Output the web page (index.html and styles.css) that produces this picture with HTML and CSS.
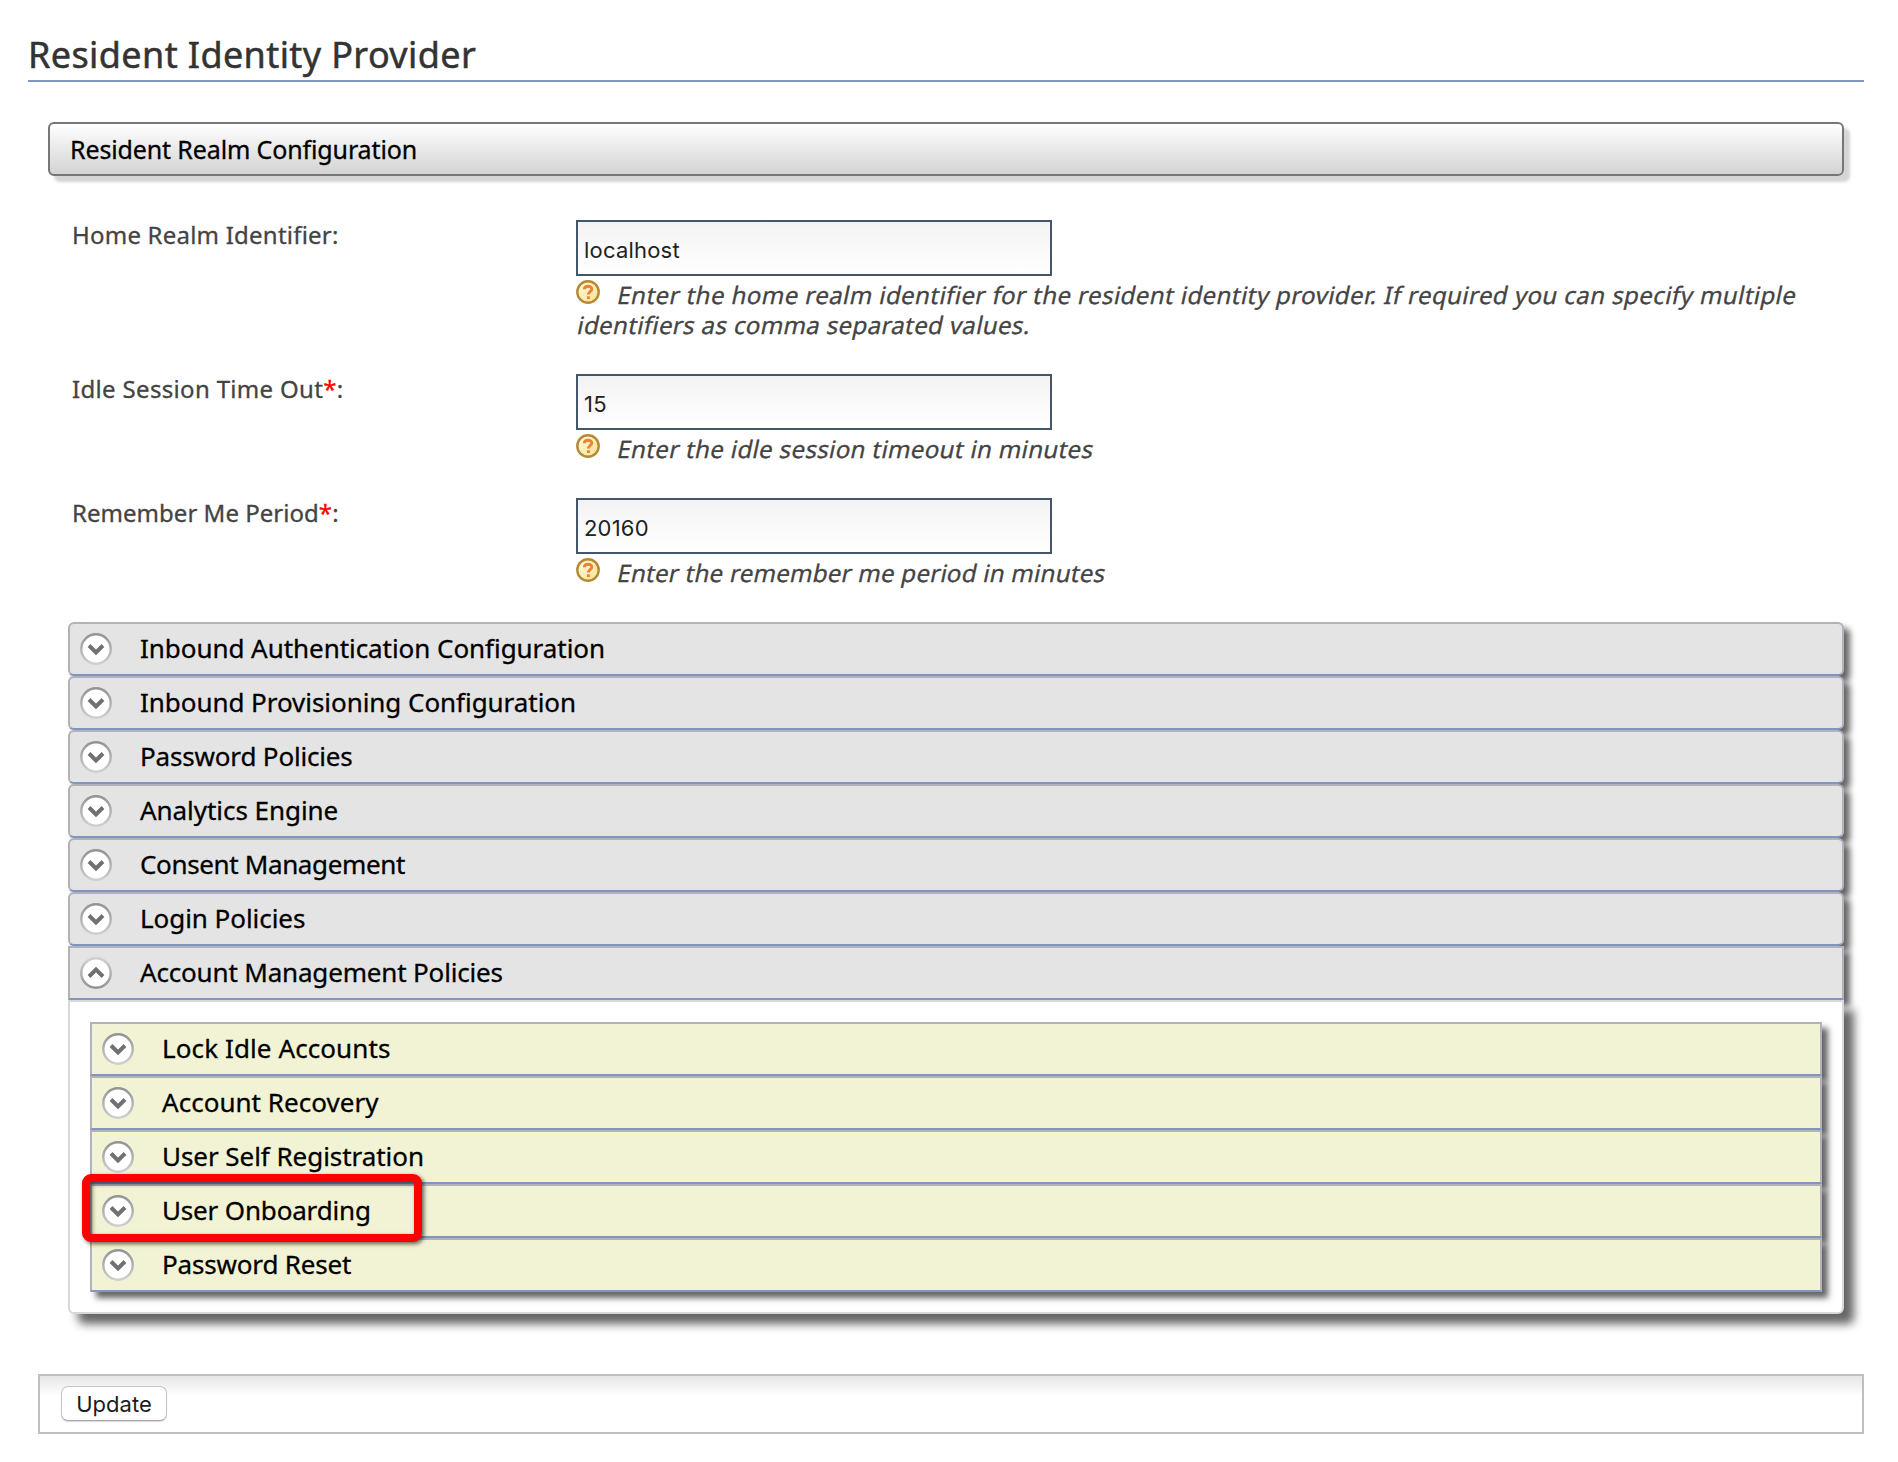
FILE: index.html
```
<!DOCTYPE html>
<html lang="en">
<head>
<meta charset="utf-8">
<title>Resident Identity Provider</title>
<link rel="stylesheet" href="styles.css">
</head>
<body>
<svg class="defs" width="0" height="0" aria-hidden="true">
  <defs>
    <linearGradient id="ring" x1="0" y1="0" x2="0" y2="1">
      <stop offset="0" stop-color="#929395"/><stop offset="1" stop-color="#cfcfcf"/>
    </linearGradient>
    <linearGradient id="ringUp" x1="0" y1="0" x2="0" y2="1">
      <stop offset="0" stop-color="#cfcfcf"/><stop offset="1" stop-color="#929395"/>
    </linearGradient>
    <linearGradient id="gold" x1="0" y1="0" x2="1" y2="1">
      <stop offset="0" stop-color="#fffbe0"/><stop offset="1" stop-color="#f9e190"/>
    </linearGradient>
    <symbol id="down" viewBox="0 0 32 32">
      <circle cx="16" cy="16" r="14.7" fill="#fff" stroke="url(#ring)" stroke-width="2.4"/>
      <path d="M9 12.500l7 7l7-7" fill="none" stroke="#6f7174" stroke-width="4"/>
    </symbol>
    <symbol id="up" viewBox="0 0 32 32">
      <circle cx="16" cy="16" r="14.700" fill="#fff" stroke="url(#ringUp)" stroke-width="2.4"/>
      <path d="M9 19.500l7-7l7 7" fill="none" stroke="#6f7174" stroke-width="4"/>
    </symbol>
    <symbol id="help" viewBox="0 0 24 24">
      <circle cx="12" cy="12" r="10.700" fill="url(#gold)" stroke="#b58a33" stroke-width="2.400"/>
      <path d="M8.300 9.200C8.500 5.300 15.900 5.200 15.800 9.300C15.700 11.800 12.400 11.700 12.400 14.600" fill="none" stroke="#ea8238" stroke-width="2.900"/>
      <rect x="11" y="16.300" width="2.900" height="2.700" fill="#ea8238"/>
    </symbol>
  </defs>
</svg>
<main class="page">
  <h1 class="title">Resident Identity Provider</h1>
  <section class="content">
    <h2 class="realm">Resident Realm Configuration</h2>
    <form class="form">
      <div class="field">
        <label class="label home" for="home">Home Realm Identifier:</label>
        <div class="control">
          <input class="input" id="home" type="text" value="localhost">
          <p class="hint"><svg class="help"><use href="#help"/></svg><span class="line long">Enter the home realm identifier for the resident identity provider. If required you can specify multiple</span><br><span class="line">identifiers as comma separated values.</span></p>
        </div>
      </div>
      <div class="field">
        <label class="label" for="idle">Idle Session Time Out<span class="required">*</span>:</label>
        <div class="control">
          <input class="input" id="idle" type="text" value="15">
          <p class="hint"><svg class="help"><use href="#help"/></svg><span class="line">Enter the idle session timeout in minutes</span></p>
        </div>
      </div>
      <div class="field">
        <label class="label remember" for="remember">Remember Me Period<span class="required">*</span>:</label>
        <div class="control">
          <input class="input" id="remember" type="text" value="20160">
          <p class="hint"><svg class="help"><use href="#help"/></svg><span class="line short">Enter the remember me period in minutes</span></p>
        </div>
      </div>
    </form>
    <div class="accordion">
      <div class="row"><svg class="arrow"><use href="#down"/></svg><span>Inbound Authentication Configuration</span></div>
      <div class="row"><svg class="arrow"><use href="#down"/></svg><span>Inbound Provisioning Configuration</span></div>
      <div class="row"><svg class="arrow"><use href="#down"/></svg><span class="snug">Password Policies</span></div>
      <div class="row"><svg class="arrow"><use href="#down"/></svg><span>Analytics Engine</span></div>
      <div class="row"><svg class="arrow"><use href="#down"/></svg><span class="tight">Consent Management</span></div>
      <div class="row"><svg class="arrow"><use href="#down"/></svg><span>Login Policies</span></div>
      <div class="row open"><svg class="arrow"><use href="#up"/></svg><span class="snug">Account Management Policies</span></div>
      <div class="panel">
        <div class="row sub"><svg class="arrow"><use href="#down"/></svg><span class="loose">Lock Idle Accounts</span></div>
        <div class="row sub"><svg class="arrow"><use href="#down"/></svg><span class="wide">Account Recovery</span></div>
        <div class="row sub"><svg class="arrow"><use href="#down"/></svg><span>User Self Registration</span></div>
        <div class="row sub marked"><svg class="arrow"><use href="#down"/></svg><span class="snug">User Onboarding</span></div>
        <div class="row sub"><svg class="arrow"><use href="#down"/></svg><span class="snug">Password Reset</span></div>
      </div>
    </div>
  </section>
  <div class="actions"><button class="button" type="button">Update</button></div>
</main>
</body>
</html>
```
FILE: styles.css
```
*, *::after { box-sizing: border-box; }
body {
  margin: 0;
  background: #fff;
  color: #000;
  font-family: "Noto Sans", "Open Sans", sans-serif;
}
.defs { position: absolute; }
.page { padding: 29px 34px 0 28px; }
.title {
  margin: 0;
  height: 53px;
  border-bottom: 2px solid #8396bf;
  color: #333;
  font-size: 36px;
  font-weight: 400;
  line-height: 52px;
  letter-spacing: 0.39px;
  -webkit-text-stroke: 0.5px;
}
.content { padding: 40px 20px 0; }
.realm {
  margin: 0;
  height: 54px;
  padding-left: 20px;
  border: 2px solid #777;
  border-radius: 6px;
  background: linear-gradient(#fff, #d3d3d3);
  box-shadow: 6px 6px 3px #d5d5d5;
  font-size: 25px;
  font-weight: 400;
  line-height: 50px;
  letter-spacing: -0.13px;
  -webkit-text-stroke: 0.3px;
}
.form {
  display: flex;
  flex-direction: column;
  gap: 34px;
  margin: 44px 0 34px;
  padding-left: 24px;
}
.field {
  display: grid;
  grid-template-columns: 504px 1fr;
}
.label {
  color: #444;
  font-size: 24px;
  line-height: 30px;
  letter-spacing: 0.33px;
  -webkit-text-stroke: 0.3px;
}
.label.home { letter-spacing: 0.22px; }
.label.remember { letter-spacing: 0.03px; }
.required { color: #f00; }
.input {
  display: block;
  width: 476px;
  height: 56px;
  padding: 4px 6px 0;
  border: 2px solid #44566a;
  border-radius: 0;
  background: linear-gradient(#f3f3f3, #fff);
  color: #222;
  font-family: Inter, sans-serif;
  font-size: 22px;
  letter-spacing: 0.2px;
}
.hint {
  margin: 4px 0 0;
  color: #444;
  font-size: 24px;
  line-height: 30px;
  white-space: nowrap;
}
.help {
  float: left;
  width: 24px;
  height: 24px;
  margin-right: 16px;
}
.line {
  display: inline-block;
  height: 30px;
  padding-left: 2px;
  vertical-align: top;
  transform: skewX(-12deg);
  letter-spacing: 0.37px;
  -webkit-text-stroke: 0.3px;
}
.line.long { letter-spacing: 0.44px; }
.line.short { letter-spacing: 0.28px; }
.accordion { padding-left: 20px; }
.row {
  display: flex;
  align-items: center;
  gap: 28px;
  height: 54px;
  padding-left: 10px;
  border: 2px solid #b2b3ba;
  border-bottom-color: #8396bf;
  border-radius: 6px;
  background: #e4e4e4;
  box-shadow: 6px 6px 6px #666;
  font-size: 26px;
  line-height: 48px;
  letter-spacing: -0.05px;
  -webkit-text-stroke: 0.3px;
}
.row span { padding-bottom: 2px; }
.row .snug { letter-spacing: -0.17px; }
.row .tight { letter-spacing: -0.36px; }
.row .loose { letter-spacing: 0.1px; }
.row .wide { letter-spacing: 0.03px; }
.row.open { border-radius: 0; }
.arrow {
  flex: none;
  width: 32px;
  height: 32px;
}
.panel {
  padding: 20px;
  border: 2px solid #d8d8da;
  border-radius: 0 0 6px 6px;
  background: #fff;
  box-shadow: 10px 10px 10px #666;
}
.row.sub {
  position: relative;
  border-radius: 0;
  background: #f2f3d5;
}
.marked::after {
  content: "";
  position: absolute;
  z-index: 1;
  left: -10px;
  top: -12px;
  width: 340px;
  height: 68px;
  border: 8px solid #f00;
  border-radius: 9px;
  filter: drop-shadow(2px 2px 2px rgba(0, 0, 0, 0.6));
}
.actions {
  display: flex;
  align-items: flex-start;
  height: 60px;
  margin: 60px 0 0 10px;
  padding: 10px 21px;
  border: 2px solid #bfbfbf;
  background: linear-gradient(#e6e6e6, #fff 20px);
}
.button {
  width: 106px;
  height: 35px;
  padding: 0;
  border: 1px solid #c4c4c4;
  border-bottom-color: #a8a8a8;
  border-radius: 7px;
  background: #fff;
  box-shadow: 0 1px 1px rgba(0, 0, 0, 0.15);
  color: #1c1c1c;
  font-family: Inter, sans-serif;
  font-size: 22px;
}
```
